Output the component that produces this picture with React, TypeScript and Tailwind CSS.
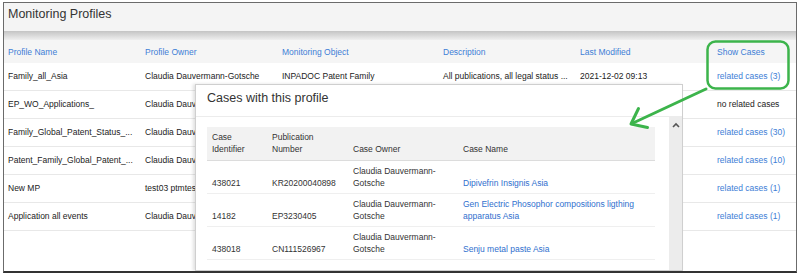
import React from 'react';

const profiles = [
  { name: 'Family_all_Asia', owner: 'Claudia Dauvermann-Gotsche', object: 'INPADOC Patent Family', desc: 'All publications, all legal status ...', modified: '2021-12-02 09:13', cases: 'related cases (3)' },
  { name: 'EP_WO_Applications_', owner: 'Claudia Dauvermann-Gotsche', object: '', desc: '', modified: '', cases: null },
  { name: 'Family_Global_Patent_Status_...', owner: 'Claudia Dauvermann-Gotsche', object: '', desc: '', modified: '', cases: 'related cases (30)' },
  { name: 'Patent_Family_Global_Patent_...', owner: 'Claudia Dauvermann-Gotsche', object: '', desc: '', modified: '', cases: 'related cases (10)' },
  { name: 'New MP', owner: 'test03 ptmtest', object: '', desc: '', modified: '', cases: 'related cases (1)' },
  { name: 'Application all events', owner: 'Claudia Dauvermann-Gotsche', object: '', desc: '', modified: '', cases: 'related cases (1)' },
];

const cases = [
  { id: '438021', pub: 'KR20200040898', owner: ['Claudia Dauvermann-', 'Gotsche'], name: ['Dipivefrin Insignis Asia'] },
  { id: '14182', pub: 'EP3230405', owner: ['Claudia Dauvermann-', 'Gotsche'], name: ['Gen Electric Phosophor compositions ligthing', 'apparatus Asia'] },
  { id: '438018', pub: 'CN111526967', owner: ['Claudia Dauvermann-', 'Gotsche'], name: ['Senju metal paste Asia'] },
];

const mainCols = 'grid grid-cols-[137px_137px_161px_137px_137px_1fr]';
const caseCols = 'grid grid-cols-[60px_81px_110px_1fr]';

const App: React.FC = () => {
  return (
    <div className="relative w-[800px] h-[274px] bg-white pt-[2px] pl-[3px] pr-[3px] font-['Liberation_Sans',Arial,sans-serif] overflow-hidden">
      <div className="relative h-[271px] border border-[#6b6b6b] border-b-2 border-b-[#333] overflow-hidden">
        {/* Page header */}
        <div className="h-[28px] bg-[#f4f4f4] pl-[4px] pt-[4px] text-[12.5px] leading-[14px] text-[#333]">
          Monitoring Profiles
        </div>
        <div className="h-[9px] bg-gradient-to-b from-[#c4c4c4] to-[#efefef]"></div>

        {/* Profiles table */}
        <div className={`${mainCols} h-[23px] pt-[2px] bg-[#f5f5f5] items-center text-[8.5px] text-[#3d7ed6]`}>
          <div className="pl-[4px]">Profile Name</div>
          <div className="pl-[4px]">Profile Owner</div>
          <div className="pl-[4px]">Monitoring Object</div>
          <div className="pl-[4px]">Description</div>
          <div className="pl-[4px]">Last Modified</div>
          <div className="pl-[4px]">Show Cases</div>
        </div>
        {profiles.map((p, i) => (
          <div key={i} className={`${mainCols} h-[28px] items-center border-b border-[#e8e8e8] text-[8.5px] text-[#222] whitespace-nowrap`}>
            <div className="pl-[4px]">{p.name}</div>
            <div className={i === 0 ? 'pl-[4px]' : 'pl-[4px] overflow-hidden'}>{p.owner}</div>
            <div className="pl-[4px]">{p.object}</div>
            <div className="pl-[4px]">{p.desc}</div>
            <div className="pl-[4px]">{p.modified}</div>
            <div className="pl-[4px]">
              {p.cases ? <span className="text-[#3d7ed6]">{p.cases}</span> : 'no related cases'}
            </div>
          </div>
        ))}

        {/* Cases dialog */}
        <div className="absolute left-[191px] top-[81px] bottom-0 w-[488px] bg-white border border-[#cfcfcf] shadow-[-2px_0_3px_rgba(0,0,0,0.12)] flex flex-col">
          <div className="h-[32px] pl-[11px] pt-[4px] border-b border-[#ececec] text-[12.5px] text-[#333]">
            Cases with this profile
          </div>
          <div className="flex-1 flex">
            <div className="flex-1 pl-[11px] pr-[14px] pt-[10px]">
              <div className={`${caseCols} h-[34px] items-end pb-[5px] bg-[#f2f2f2] border-b border-[#dcdcdc] text-[8.5px] leading-[12px] text-[#333]`}>
                <div className="pl-[5px]">Case<br />Identifier</div>
                <div className="pl-[5px]">Publication<br />Number</div>
                <div className="pl-[5px]">Case Owner</div>
                <div className="pl-[5px]">Case Name</div>
              </div>
              {cases.map((c, i) => (
                <div key={i} className={`${caseCols} h-[33px] items-end pb-[4px] border-b border-[#efefef] text-[8.5px] leading-[11.5px] text-[#333]`}>
                  <div className="pl-[5px]">{c.id}</div>
                  <div className="pl-[5px]">{c.pub}</div>
                  <div className="pl-[5px]">{c.owner[0]}<br />{c.owner[1]}</div>
                  <div className="pl-[5px] text-[#2f6fce]">
                    {c.name.map((n, j) => (
                      <div key={j}>{n}</div>
                    ))}
                  </div>
                </div>
              ))}
            </div>
            <div className="w-[13px] bg-[#ececec] flex justify-center pt-[3px]">
              <svg width="10" height="10" viewBox="0 0 10 10">
                <path d="M2 7 L5 4 L8 7" fill="none" stroke="#555" strokeWidth="1.6" />
              </svg>
            </div>
          </div>
        </div>
      </div>

      {/* Annotation */}
      <svg className="absolute inset-0 pointer-events-none" width="800" height="274" viewBox="0 0 800 274">
        <rect x="707.5" y="41.5" width="81" height="47" rx="8" fill="none" stroke="#3cb44b" strokeWidth="2.5" />
        <line x1="706" y1="89" x2="632" y2="123.5" stroke="#3cb44b" strokeWidth="3" strokeLinecap="round" />
        <polyline points="638.5,108.5 631,124 647.5,127.5" fill="none" stroke="#3cb44b" strokeWidth="3" strokeLinecap="round" strokeLinejoin="round" />
      </svg>
    </div>
  );
};

export default App;
